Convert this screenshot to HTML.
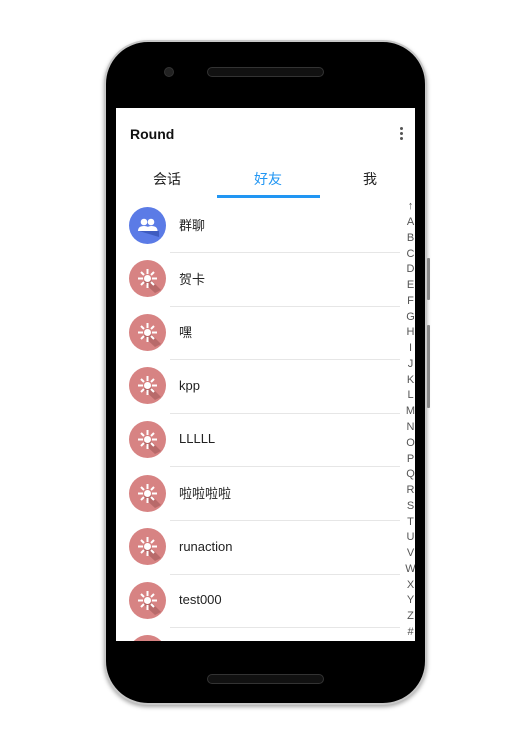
<!DOCTYPE html>
<html><head><meta charset="utf-8"><style>
*{margin:0;padding:0;box-sizing:border-box}
body{width:531px;height:750px;background:#fff;position:relative;overflow:hidden;font-family:"Liberation Sans","Noto Sans CJK SC",sans-serif}
.phone{position:absolute;left:104px;top:40px;width:323px;height:665px;background:#000;border-radius:44px;border:2px solid #c8c8c8;box-shadow:0 2px 4px rgba(0,0,0,.35)}
.btn{position:absolute;left:427px;width:3px;background:#888;border-radius:1px}
.screen{position:absolute;left:116px;top:108px;width:299px;height:533px;background:#fff;overflow:hidden}
.cam{position:absolute;left:164px;top:67px;width:10px;height:10px;border-radius:50%;background:#222;border:1px solid #333}
.spk{position:absolute;left:207px;top:67px;width:117px;height:10px;border-radius:5px;background:#111;border:1px solid #333}
.spk2{position:absolute;left:207px;top:674px;width:117px;height:10px;border-radius:5px;background:#111;border:1px solid #333}
.t{position:absolute;white-space:nowrap}
.av{position:absolute;left:13px;width:37px;height:37px;border-radius:50%}
.name{position:absolute;left:63px;font-size:13px;color:#222}
.cjk{margin-top:-2px}
.line{position:absolute;left:54px;width:230px;height:1px;background:#e6e6e6}
.idx{position:absolute;left:287.5px;width:14px;text-align:center;font-size:11px;color:#555;line-height:12px}
</style></head><body>
<div class="phone"></div>
<div class="btn" style="top:258px;height:42px"></div>
<div class="btn" style="top:325px;height:83px"></div>
<div class="cam"></div><div class="spk"></div><div class="spk2"></div>
<div class="screen">
<div class="t" style="left:14px;top:18px;font-size:14px;font-weight:bold;color:#111">Round</div>
<div style="position:absolute;left:284px;top:19px;width:3px">
<div style="width:3px;height:3px;border-radius:50%;background:#555;margin-bottom:2px"></div>
<div style="width:3px;height:3px;border-radius:50%;background:#555;margin-bottom:2px"></div>
<div style="width:3px;height:3px;border-radius:50%;background:#555"></div></div>
<div class="t" style="left:37px;top:61px;font-size:14px;color:#222">会话</div>
<div class="t" style="left:138px;top:61px;font-size:14px;color:#2196f3">好友</div>
<div class="t" style="left:247px;top:61px;font-size:14px;color:#222">我</div>
<div style="position:absolute;left:101px;top:87px;width:103px;height:3px;background:#2196f3"></div>
<div id="list"></div>
<div class="idx" style="top:92px">↑</div>
<div id="idx"></div>
</div>
<script>
var names=["群聊","贺卡","嘿","kpp","LLLLL","啦啦啦啦","runaction","test000",""];
var cjk=[1,1,1,0,0,1,0,0,0];
var h="";
for(var i=0;i<names.length;i++){
 var cy=117+i*53.6;
 if(i==0){
  h+='<div class="av" style="top:'+(cy-18.5)+'px;background:#5b7be6"><svg width="37" height="37" viewBox="0 0 37 37"><path d="M10 24 L30 30 L30 24Z" fill="#3f5cc0"/><circle cx="15" cy="15" r="3.3" fill="#fff"/><circle cx="22" cy="15" r="3.3" fill="#fff"/><path d="M9 24 q0-5 6-5 q6 0 6 5z" fill="#fff"/><path d="M17 24 q0-5 5.5-5 q6 0 6 5z" fill="#fff"/></svg></div>';
 }else{
  h+='<div class="av" style="top:'+(cy-18.5)+'px;background:#d78383"><svg width="37" height="37" viewBox="0 0 37 37"><path d="M20 18 L32 30 L26 33 L14 22Z" fill="#b86a6a"/><g stroke="#fff" stroke-width="2"><line x1="18.5" y1="9" x2="18.5" y2="14"/><line x1="18.5" y1="23" x2="18.5" y2="28"/><line x1="9" y1="18.5" x2="14" y2="18.5"/><line x1="23" y1="18.5" x2="28" y2="18.5"/><line x1="12" y1="12" x2="15" y2="15"/><line x1="22" y1="22" x2="25" y2="25"/><line x1="25" y1="12" x2="22" y2="15"/><line x1="12" y1="25" x2="15" y2="22"/></g><circle cx="18.5" cy="18.5" r="3.5" fill="#fff"/></svg></div>';
 }
 h+='<div class="t name'+(cjk[i]?' cjk':'')+'" style="top:'+(cy-8)+'px">'+names[i]+'</div>';
 if(i<8)h+='<div class="line" style="top:'+(cy+27)+'px"></div>';
}
document.getElementById("list").innerHTML=h;
var L="ABCDEFGHIJKLMNOPQRSTUVWXYZ#",s="";
for(var j=0;j<L.length;j++)s+='<div class="idx" style="top:'+(108+j*15.77)+'px">'+L[j]+'</div>';
document.getElementById("idx").innerHTML=s;
</script>
</body></html>
